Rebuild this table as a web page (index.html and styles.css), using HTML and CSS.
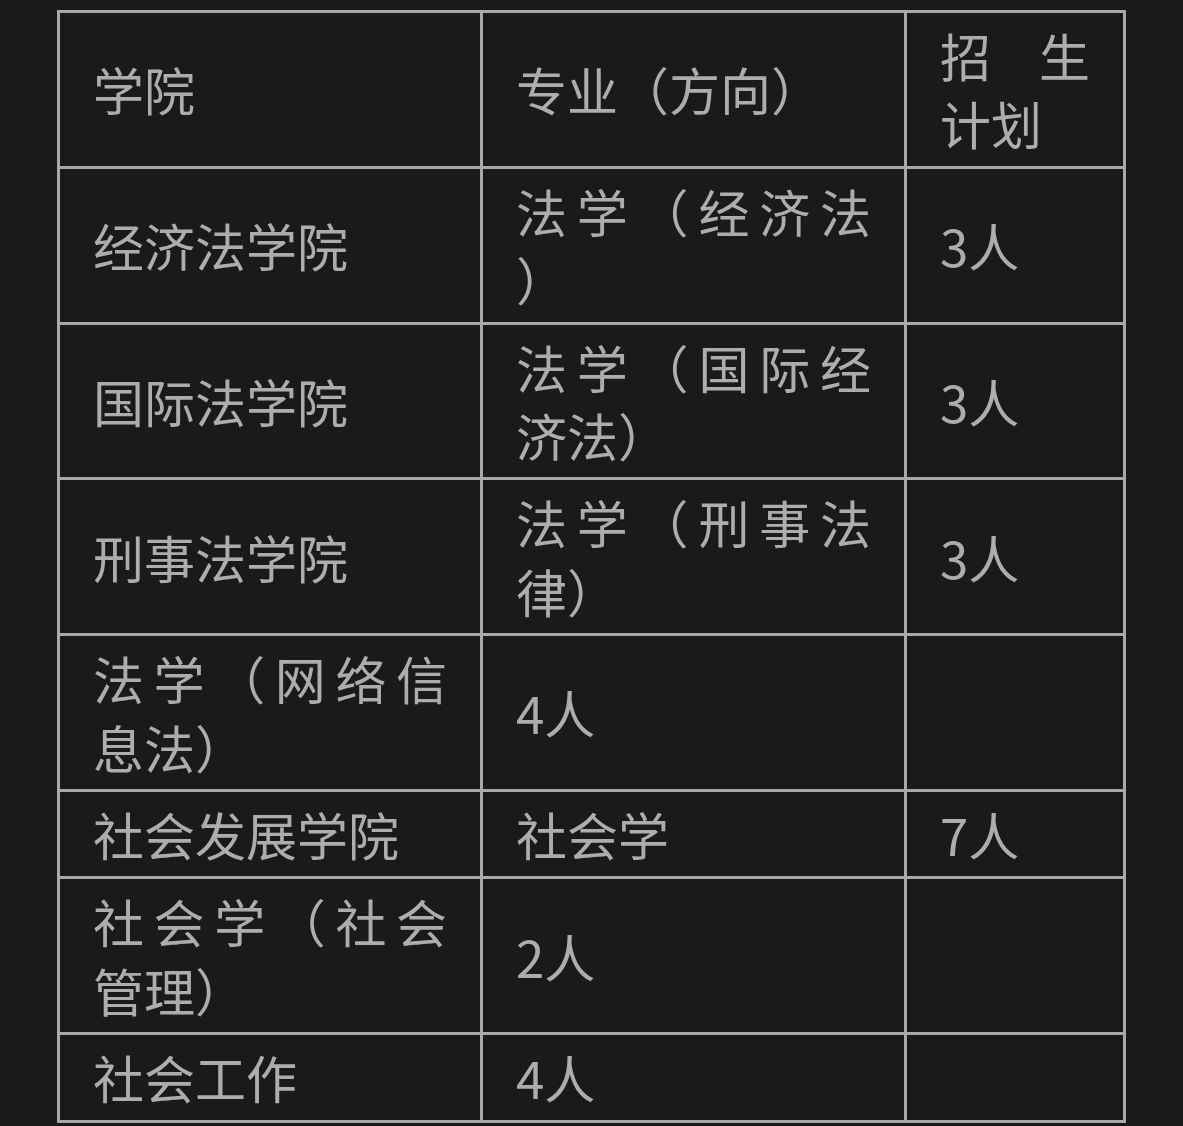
FILE: index.html
```html
<!DOCTYPE html>
<html lang="zh-CN">
<head>
<meta charset="utf-8">
<title>招生计划</title>
<link rel="stylesheet" href="styles.css">
</head>
<body>
<table class="plan">
  <colgroup>
    <col class="c-college">
    <col class="c-major">
    <col class="c-count">
  </colgroup>
  <tr>
    <td>学院</td>
    <td>专业（方向）</td>
    <td>招生计划</td>
  </tr>
  <tr>
    <td>经济法学院</td>
    <td>法学（经济法）</td>
    <td>3人</td>
  </tr>
  <tr>
    <td>国际法学院</td>
    <td>法学（国际经济法）</td>
    <td>3人</td>
  </tr>
  <tr>
    <td>刑事法学院</td>
    <td>法学（刑事法律）</td>
    <td>3人</td>
  </tr>
  <tr>
    <td>法学（网络信息法）</td>
    <td>4人</td>
    <td></td>
  </tr>
  <tr>
    <td>社会发展学院</td>
    <td>社会学</td>
    <td>7人</td>
  </tr>
  <tr>
    <td>社会学（社会管理）</td>
    <td>2人</td>
    <td></td>
  </tr>
  <tr>
    <td>社会工作</td>
    <td>4人</td>
    <td></td>
  </tr>
</table>
</body>
</html>
```

FILE: styles.css
```css
html, body {
  margin: 0;
  padding: 0;
  background: #1a1a1a;
}

body {
  padding: 10px 0 0 57px;
  font-family: "Noto Sans CJK SC", "Noto Sans", sans-serif;
  color: #adadad;
}

.plan {
  border-collapse: collapse;
  table-layout: fixed;
  width: 1069px;
  background: #1a1a1a;
}

.c-college { width: 423px; }
.c-major { width: 424px; }
.c-count { width: 219px; }

.plan td {
  border: 3px solid #a9a9a9;
  padding: 8px 33px;
  font-size: 51px;
  line-height: 68.4px;
  text-align: justify;
  line-break: anywhere;
  text-spacing-trim: space-all;
  vertical-align: middle;
  font-weight: 400;
}
```
